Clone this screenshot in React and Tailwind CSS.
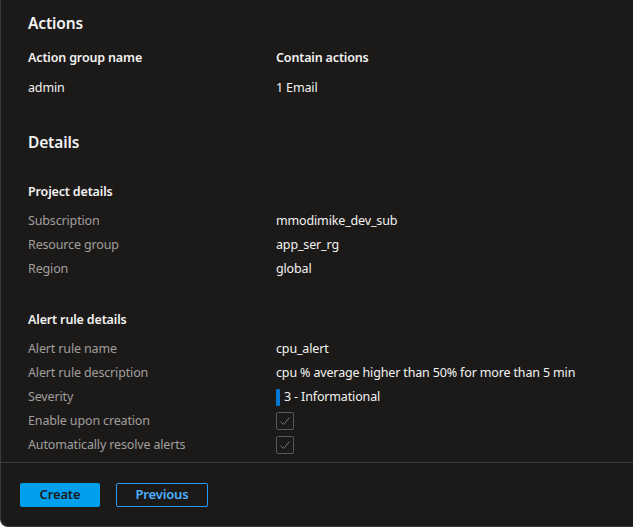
import React from "react";

const font = { fontFamily: '"Noto Sans", "Open Sans", sans-serif' };

function Check() {
  return (
    <div className="w-[18px] h-[18px] border border-[#5a5958] rounded-[2px] flex items-center justify-center">
      <svg width="14" height="14" viewBox="0 0 14 14" fill="none">
        <path d="M2.5 7.5 L5.5 10.5 L11.5 3.5" stroke="#7a7978" strokeWidth="1" />
      </svg>
    </div>
  );
}

function Row({ label, children }) {
  return (
    <div className="flex items-center h-6">
      <div className="w-[248px] text-[#a19f9d]">{label}</div>
      <div className="text-[#f3f2f1] flex items-center">{children}</div>
    </div>
  );
}

export default function App() {
  return (
    <div
      className="w-[633px] h-[527px] bg-[#1b1a19] border-l border-b border-[#3b3a39] rounded-bl-[8px] flex flex-col text-[12.5px] tracking-[-0.15px] overflow-hidden"
      style={font}
    >
      <div className="flex-1 pl-[27px] pt-[11px]">
        <div className="text-[15.5px] font-semibold text-[#f3f2f1] leading-6">Actions</div>
        <div className="flex mt-[11px] h-6 items-center font-semibold text-[#f3f2f1]">
          <div className="w-[248px]">Action group name</div>
          <div>Contain actions</div>
        </div>
        <div className="flex mt-[6px] h-6 items-center text-[#f3f2f1]">
          <div className="w-[248px]">admin</div>
          <div>1 Email</div>
        </div>
        <div className="text-[15.5px] font-semibold text-[#f3f2f1] leading-6 mt-[30px]">Details</div>
        <div className="font-semibold text-[#f3f2f1] h-6 flex items-center mt-[26px]">Project details</div>
        <div className="mt-[5px]">
          <Row label="Subscription">mmodimike_dev_sub</Row>
          <Row label="Resource group">app_ser_rg</Row>
          <Row label="Region">global</Row>
        </div>
        <div className="font-semibold text-[#f3f2f1] h-6 flex items-center mt-[27px]">Alert rule details</div>
        <div className="mt-[5px]">
          <Row label="Alert rule name">cpu_alert</Row>
          <Row label="Alert rule description">cpu % average higher than 50% for more than 5 min</Row>
          <Row label="Severity">
            <span className="w-[4px] h-[17px] bg-[#0078d4] mr-[4px] rounded-[1px]"></span>
            3 - Informational
          </Row>
          <Row label="Enable upon creation"><Check /></Row>
          <Row label="Automatically resolve alerts"><Check /></Row>
        </div>
      </div>
      <div className="border-t border-[#3b3a39] h-[64px] shrink-0 flex items-start pt-[20px] pl-[19px] gap-[16px]">
        <button className="w-[80px] h-[24px] bg-[#00a0ef] text-[#1b1a19] rounded-[2px] text-[13px] font-semibold">
          Create
        </button>
        <button className="w-[92px] h-[24px] border border-[#2899f5] text-[#4db2ff] rounded-[2px] text-[13px] font-semibold">
          Previous
        </button>
      </div>
    </div>
  );
}
